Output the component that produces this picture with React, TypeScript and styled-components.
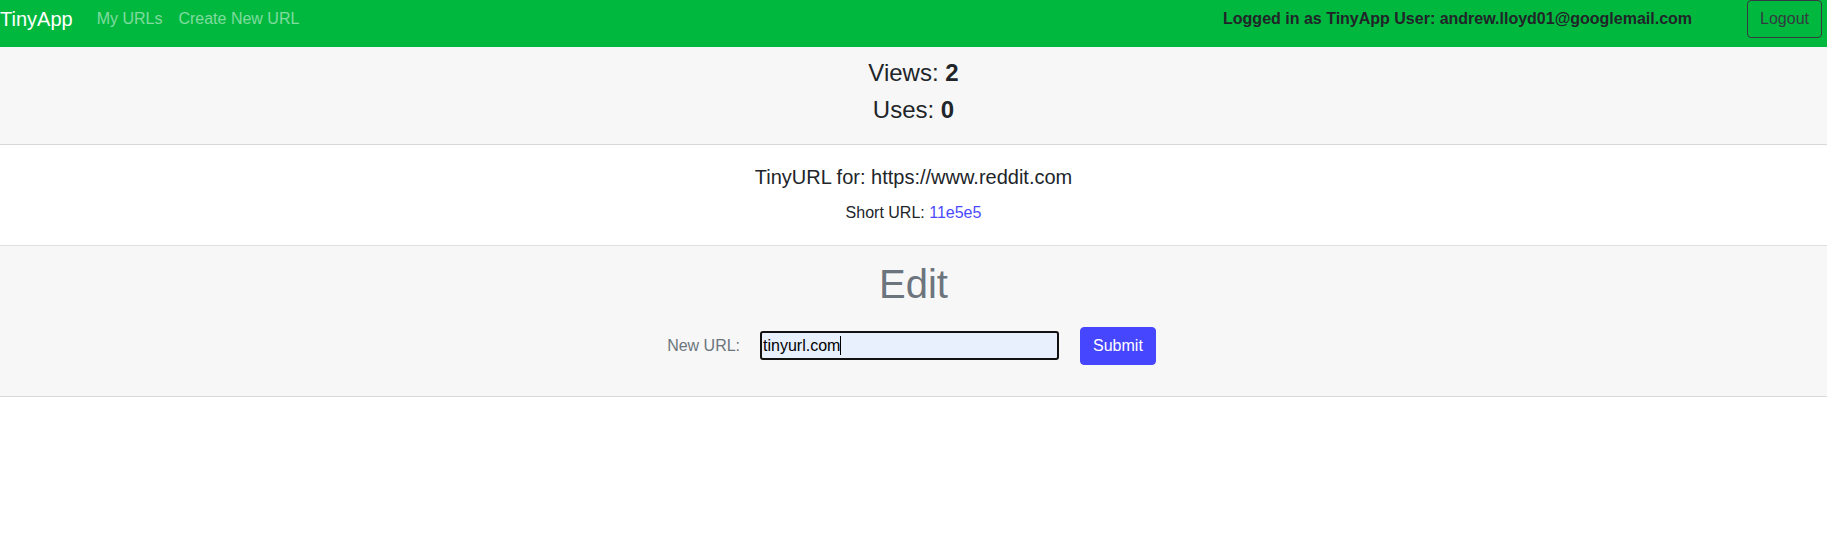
import React from "react";
import styled, { createGlobalStyle } from "styled-components";

const GlobalStyle = createGlobalStyle`
  html, body {
    margin: 0;
    padding: 0;
    background: #ffffff;
    font-family: "Liberation Sans", Arial, Helvetica, sans-serif;
    color: #212529;
    font-size: 16px;
    line-height: 1.5;
  }
  * { box-sizing: border-box; }
`;

const NavBar = styled.nav`
  display: flex;
  align-items: center;
  justify-content: space-between;
  height: 47px;
  padding: 0 5px 9px 0;
  background: #00b83e;
`;

const NavLeft = styled.div`
  display: flex;
  align-items: center;
  height: 38px;
`;

const Brand = styled.a`
  font-size: 20px;
  line-height: 30px;
  color: #ffffff;
  text-decoration: none;
  margin-right: 16px;
  white-space: nowrap;
`;

const NavLink = styled.a`
  font-size: 16px;
  line-height: 24px;
  padding: 0 8px;
  color: rgba(255, 255, 255, 0.5);
  text-decoration: none;
  white-space: nowrap;
`;

const NavRight = styled.div`
  display: flex;
  align-items: center;
  gap: 55px;
  height: 38px;
`;

const UserText = styled.span`
  font-weight: 700;
  font-size: 16px;
  line-height: 24px;
  color: #212529;
  white-space: nowrap;
`;

const OutlineButton = styled.button`
  font-family: inherit;
  font-size: 16px;
  line-height: 24px;
  padding: 6px 12px;
  border: 1px solid #343a40;
  border-radius: 4px;
  background: transparent;
  color: #343a40;
  cursor: pointer;
`;

const Section = styled.section<{ $muted?: boolean; $pt: number; $pb: number }>`
  display: flex;
  flex-direction: column;
  align-items: center;
  background: ${(p) => (p.$muted ? "#f7f7f7" : "#ffffff")};
  border-bottom: 1px solid rgba(0, 0, 0, 0.125);
  padding: ${(p) => p.$pt}px 20px ${(p) => p.$pb}px;
  text-align: center;
`;

const StatLine = styled.h4`
  margin: 0 0 8px;
  font-size: 24px;
  line-height: 28.8px;
  font-weight: 400;
  color: #212529;
`;

const Strong = styled.b`
  font-weight: 700;
`;

const CardTitle = styled.h5`
  margin: 0 0 12px;
  font-size: 20px;
  line-height: 24px;
  font-weight: 400;
  color: #212529;
`;

const ShortLine = styled.p`
  margin: 0;
  font-size: 16px;
  line-height: 24px;
  color: #212529;
`;

const ShortLink = styled.a`
  color: #4a4aff;
  text-decoration: none;
`;

const EditTitle = styled.h1`
  margin: 0 0 19px;
  font-size: 40px;
  line-height: 48px;
  font-weight: 400;
  color: #6c757d;
`;

const EditForm = styled.form`
  display: flex;
  align-items: center;
  height: 38px;
  margin-right: 4px;
`;

const Label = styled.label`
  font-size: 16px;
  line-height: 24px;
  color: #6c757d;
  margin-right: 20px;
  white-space: nowrap;
`;

const InputWrap = styled.div`
  position: relative;
  display: flex;
`;

const UrlInput = styled.input`
  width: 299px;
  height: 29px;
  padding: 0 1px;
  font-family: inherit;
  font-size: 16px;
  color: #000000;
  background: #e8f0fe;
  border: 2px solid #111111;
  border-radius: 3px;
  outline: none;
  caret-color: #000000;
`;

const Caret = styled.span`
  position: absolute;
  left: 80px;
  top: 5px;
  width: 1px;
  height: 19px;
  background: #000000;
  pointer-events: none;
`;

const SubmitButton = styled.button`
  margin-left: 21px;
  font-family: inherit;
  font-size: 16px;
  line-height: 24px;
  padding: 6px 12px;
  border: 1px solid #4646ff;
  border-radius: 4px;
  background: #4646ff;
  color: #ffffff;
  cursor: pointer;
`;

export default function App() {
  return (
    <>
      <GlobalStyle />
      <NavBar>
        <NavLeft>
          <Brand href="#">TinyApp</Brand>
          <NavLink href="#">My URLs</NavLink>
          <NavLink href="#">Create New URL</NavLink>
        </NavLeft>
        <NavRight>
          <UserText>Logged in as TinyApp User: andrew.lloyd01@googlemail.com</UserText>
          <OutlineButton type="button">Logout</OutlineButton>
        </NavRight>
      </NavBar>

      <Section $muted $pt={12} $pb={11}>
        <StatLine>
          Views: <Strong>2</Strong>
        </StatLine>
        <StatLine>
          Uses: <Strong>0</Strong>
        </StatLine>
      </Section>

      <Section $pt={20} $pb={20}>
        <CardTitle>TinyURL for: https://www.reddit.com</CardTitle>
        <ShortLine>
          Short URL: <ShortLink href="#">11e5e5</ShortLink>
        </ShortLine>
      </Section>

      <Section $muted $pt={14} $pb={31}>
        <EditTitle>Edit</EditTitle>
        <EditForm onSubmit={(e) => e.preventDefault()}>
          <Label htmlFor="newurl">New URL:</Label>
          <InputWrap>
            <UrlInput id="newurl" type="text" defaultValue="tinyurl.com" />
            <Caret />
          </InputWrap>
          <SubmitButton type="submit">Submit</SubmitButton>
        </EditForm>
      </Section>
    </>
  );
}
